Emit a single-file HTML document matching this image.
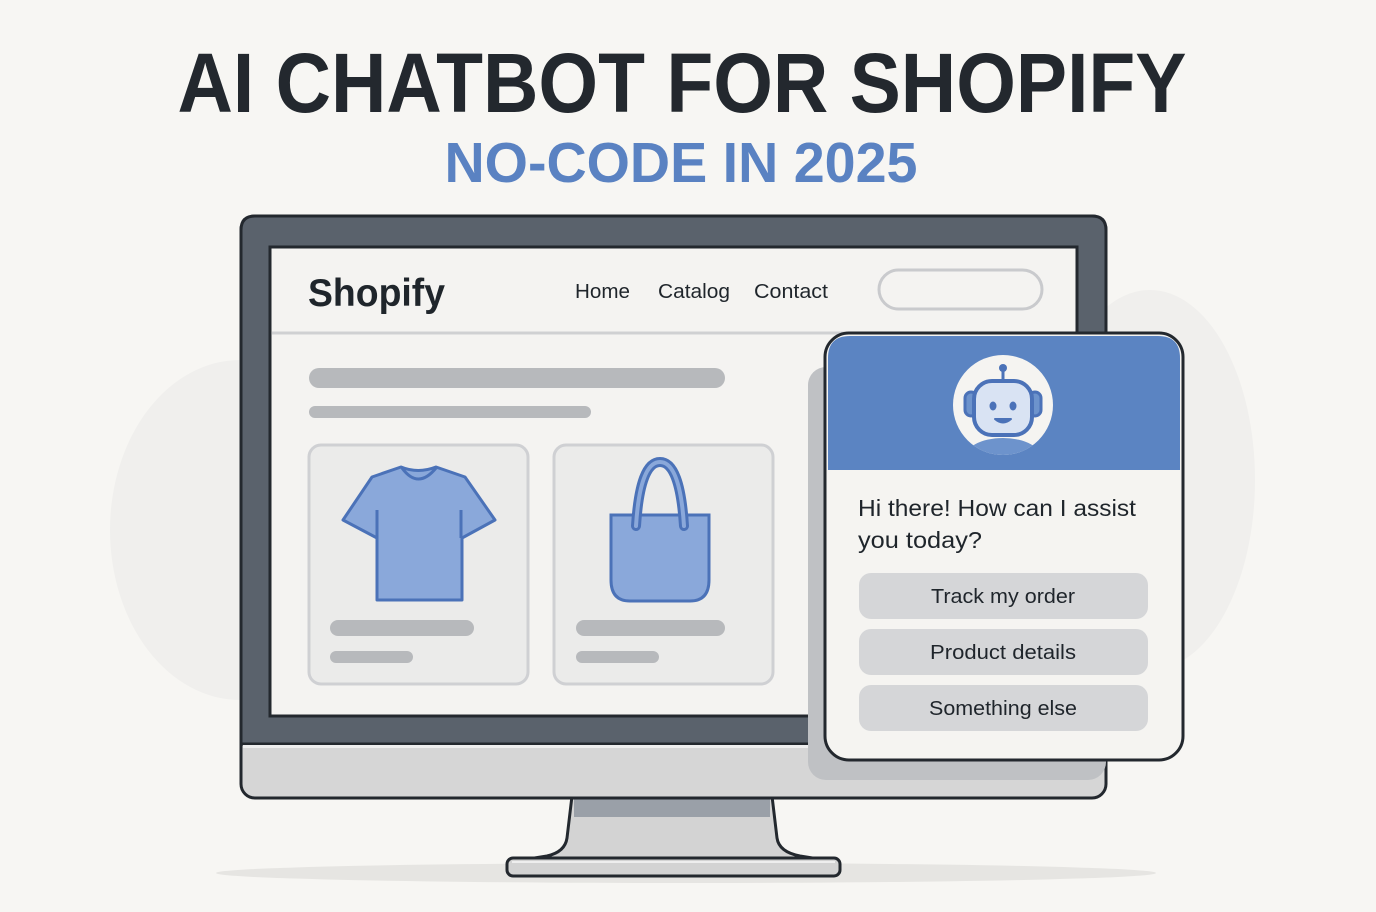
<!DOCTYPE html>
<html><head><meta charset="utf-8"><style>
html,body{margin:0;padding:0;background:#f7f6f3;}
svg{display:block}
text{font-family:"Liberation Sans","DejaVu Sans",sans-serif;}
</style></head><body>
<svg width="1376" height="912" viewBox="0 0 1376 912" xmlns="http://www.w3.org/2000/svg">
<rect width="1376" height="912" fill="#f7f6f3"/>
<ellipse cx="240" cy="530" rx="130" ry="170" fill="#f0efed"/>
<ellipse cx="1150" cy="480" rx="105" ry="190" fill="#f0efed"/>
<text x="682" y="112" text-anchor="middle" font-size="84" font-weight="bold" fill="#23282e" textLength="1009" lengthAdjust="spacingAndGlyphs">AI CHATBOT FOR SHOPIFY</text>
<text x="681" y="182" text-anchor="middle" font-size="57" font-weight="bold" fill="#5a82c2" textLength="473" lengthAdjust="spacingAndGlyphs">NO-CODE IN 2025</text>
<ellipse cx="686" cy="873" rx="470" ry="10" fill="#e6e5e2"/>
<!-- stand -->
<path d="M572 796 L772 796 L777 838 Q779 852 800 856 L825 860 Q838 862 838 866 L510 866 Q510 862 522 860 L547 856 Q565 852 567 838 Z" fill="#d3d3d3" stroke="#23282e" stroke-width="3" stroke-linejoin="round"/>
<rect x="574" y="799" width="196" height="18" fill="#9aa0a8"/>
<rect x="507" y="858" width="333" height="18" rx="6" fill="#d3d3d3" stroke="#23282e" stroke-width="3"/>
<line x1="512" y1="862" x2="835" y2="862" stroke="#eeeeee" stroke-width="2"/>
<!-- monitor -->
<rect x="241" y="216" width="865" height="582" rx="14" fill="#d6d6d6" stroke="#23282e" stroke-width="3"/>
<path d="M255 216 H1092 Q1106 216 1106 230 V744 H241 V230 Q241 216 255 216 Z" fill="#5a626c" stroke="#23282e" stroke-width="3"/>
<rect x="243" y="745" width="861" height="3" fill="#eeeeee"/>
<rect x="270" y="247" width="807" height="469" fill="#f4f3f1" stroke="#23282e" stroke-width="3"/>
<line x1="272" y1="333" x2="1075" y2="333" stroke="#cfd0d2" stroke-width="3"/>
<text x="308" y="306" font-size="39" font-weight="bold" fill="#1f252b" textLength="137" lengthAdjust="spacingAndGlyphs">Shopify</text>
<text x="575" y="298" font-size="20" fill="#1f252b" textLength="55" lengthAdjust="spacingAndGlyphs">Home</text>
<text x="658" y="298" font-size="20" fill="#1f252b" textLength="72" lengthAdjust="spacingAndGlyphs">Catalog</text>
<text x="754" y="298" font-size="20" fill="#1f252b" textLength="74" lengthAdjust="spacingAndGlyphs">Contact</text>
<rect x="879" y="270" width="163" height="39" rx="19.5" fill="#f4f3f1" stroke="#c9cacd" stroke-width="3"/>
<rect x="309" y="368" width="416" height="20" rx="10" fill="#b7b9bc"/>
<rect x="309" y="406" width="282" height="12" rx="6" fill="#b7b9bc"/>
<rect x="309" y="445" width="219" height="239" rx="12" fill="#ebebea" stroke="#cfd0d3" stroke-width="3"/>
<rect x="554" y="445" width="219" height="239" rx="12" fill="#ebebea" stroke="#cfd0d3" stroke-width="3"/>
<rect x="330" y="620" width="144" height="16" rx="8" fill="#b7b9bc"/>
<rect x="330" y="651" width="83" height="12" rx="6" fill="#b7b9bc"/>
<rect x="576" y="620" width="149" height="16" rx="8" fill="#b7b9bc"/>
<rect x="576" y="651" width="83" height="12" rx="6" fill="#b7b9bc"/>
<!-- tshirt -->
<path d="M401 467 Q418 474 436 467 L465 477 L495 520 L462 538 L462 600 L377 600 L377 538 L343 520 L372 477 Z" fill="#8aa8da" stroke="#4b72b8" stroke-width="3" stroke-linejoin="round"/>
<path d="M402 468 Q418 490 436 468" fill="none" stroke="#4b72b8" stroke-width="3"/>
<line x1="377" y1="510" x2="377" y2="538" stroke="#4b72b8" stroke-width="3"/>
<line x1="461" y1="510" x2="461" y2="538" stroke="#4b72b8" stroke-width="3"/>
<!-- bag -->
<path d="M611 515 H709 V580 Q709 601 690 601 H630 Q611 601 611 580 Z" fill="#8aa8da" stroke="#4b72b8" stroke-width="3"/>
<path d="M636 526 Q640 462 660 462 Q680 462 684 526" fill="none" stroke="#4b72b8" stroke-width="10" stroke-linecap="round"/>
<path d="M636 526 Q640 462 660 462 Q680 462 684 526" fill="none" stroke="#8aa8da" stroke-width="4" stroke-linecap="round"/>
<rect x="808" y="367" width="298" height="413" rx="18" fill="#bfc1c4"/>
<rect x="825" y="333" width="358" height="427" rx="24" fill="#f5f4f1" stroke="#23282e" stroke-width="3"/>
<path d="M850 336 H1158 Q1180 336 1180 358 V470 H828 V358 Q828 336 850 336 Z" fill="#5b84c2"/>
<clipPath id="av"><circle cx="1003" cy="405" r="50"/></clipPath>
<circle cx="1003" cy="405" r="50" fill="#f5f4f1"/>
<ellipse cx="1003" cy="460" rx="40" ry="22" fill="#6d93cc" clip-path="url(#av)"/>
<line x1="1003" y1="368" x2="1003" y2="381" stroke="#4b72b8" stroke-width="3"/>
<circle cx="1003" cy="368" r="4" fill="#4b72b8"/>
<rect x="965" y="392" width="12" height="24" rx="6" fill="#6d93cc" stroke="#4b72b8" stroke-width="3"/>
<rect x="1029" y="392" width="12" height="24" rx="6" fill="#6d93cc" stroke="#4b72b8" stroke-width="3"/>
<rect x="974" y="381" width="58" height="54" rx="18" fill="#d9e3f3" stroke="#4b72b8" stroke-width="4"/>
<ellipse cx="993" cy="406" rx="3.5" ry="4.5" fill="#4b72b8"/>
<ellipse cx="1013" cy="406" rx="3.5" ry="4.5" fill="#4b72b8"/>
<path d="M995 419 Q1003 426 1011 419 Z" fill="#4b72b8" stroke="#4b72b8" stroke-width="2" stroke-linejoin="round"/>
<text x="858" y="516" font-size="23" fill="#1f252b" textLength="278" lengthAdjust="spacingAndGlyphs">Hi there! How can I assist</text>
<text x="858" y="548" font-size="23" fill="#1f252b" textLength="124" lengthAdjust="spacingAndGlyphs">you today?</text>
<rect x="859" y="573" width="289" height="46" rx="12" fill="#d5d6d8"/>
<rect x="859" y="629" width="289" height="46" rx="12" fill="#d5d6d8"/>
<rect x="859" y="685" width="289" height="46" rx="12" fill="#d5d6d8"/>
<text x="1003" y="603" text-anchor="middle" font-size="20" fill="#1f252b" textLength="144" lengthAdjust="spacingAndGlyphs">Track my order</text>
<text x="1003" y="659" text-anchor="middle" font-size="20" fill="#1f252b" textLength="146" lengthAdjust="spacingAndGlyphs">Product details</text>
<text x="1003" y="715" text-anchor="middle" font-size="20" fill="#1f252b" textLength="148" lengthAdjust="spacingAndGlyphs">Something else</text>
</svg>
</body></html>
